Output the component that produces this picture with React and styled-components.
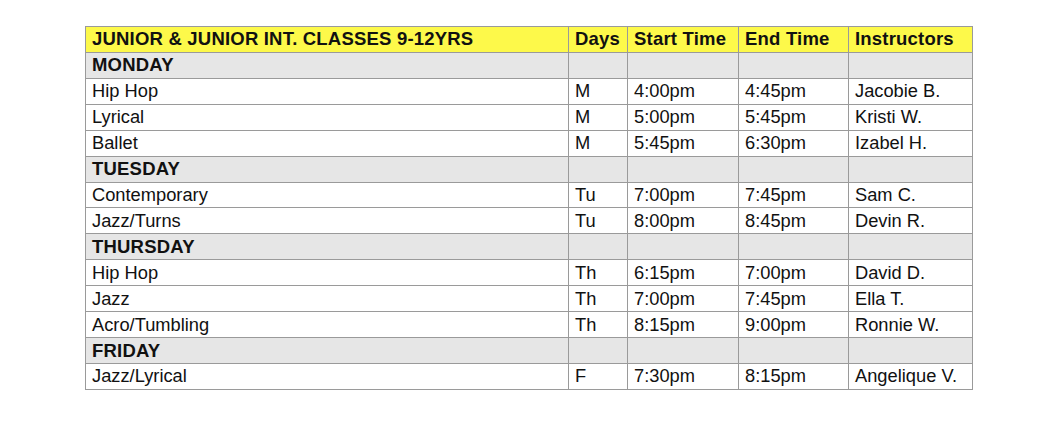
import React from 'react';
import styled, {createGlobalStyle} from 'styled-components';

const Global = createGlobalStyle`
  html, body {
    margin: 0;
    padding: 0;
    background: #fff;
  }
  body {
    font-family: "Liberation Sans", Arial, sans-serif;
  }
`;

const Page = styled.div`
  padding: 26px 0 0 85px;
`;

const Table = styled.table`
  border-collapse: collapse;
  table-layout: fixed;
  width: 887px;
  color: #111;
`;

const Row = styled.tr`
  height: 25.93px;
  background: ${props => props.kind === 'head' ? '#fdf94a' : props.kind === 'day' ? '#e6e6e6' : '#fff'};
  font-weight: ${props => props.kind === 'row' ? 'normal' : 'bold'};
  font-size: ${props => props.kind === 'row' ? '18.3px' : '18.5px'};
  letter-spacing: ${props => props.kind === 'row' ? '0' : '0.2px'};
`;

const Cell = styled.td`
  border: 1px solid #9a9a9a;
  padding: 0 0 0 6px;
  white-space: nowrap;
  overflow: hidden;
  line-height: 20px;
  vertical-align: middle;
`;

const widths = [483, 59, 111, 110, 124];

const schedule = [
  {day: 'MONDAY', classes: [
    ['Hip Hop', 'M', '4:00pm', '4:45pm', 'Jacobie B.'],
    ['Lyrical', 'M', '5:00pm', '5:45pm', 'Kristi W.'],
    ['Ballet', 'M', '5:45pm', '6:30pm', 'Izabel H.'],
  ]},
  {day: 'TUESDAY', classes: [
    ['Contemporary', 'Tu', '7:00pm', '7:45pm', 'Sam C.'],
    ['Jazz/Turns', 'Tu', '8:00pm', '8:45pm', 'Devin R.'],
  ]},
  {day: 'THURSDAY', classes: [
    ['Hip Hop', 'Th', '6:15pm', '7:00pm', 'David D.'],
    ['Jazz', 'Th', '7:00pm', '7:45pm', 'Ella T.'],
    ['Acro/Tumbling', 'Th', '8:15pm', '9:00pm', 'Ronnie W.'],
  ]},
  {day: 'FRIDAY', classes: [
    ['Jazz/Lyrical', 'F', '7:30pm', '8:15pm', 'Angelique V.'],
  ]},
];

export default function App() {
  return (
    <Page>
      <Global/>
      <Table>
        <colgroup>
          {widths.map((w, i) => <col key={i} style={{width: w}}/>)}
        </colgroup>
        <tbody>
          <Row kind="head">
            {['JUNIOR & JUNIOR INT. CLASSES 9-12YRS', 'Days', 'Start Time', 'End Time', 'Instructors']
              .map(t => <Cell key={t}>{t}</Cell>)}
          </Row>
          {schedule.map(group => (
            <React.Fragment key={group.day}>
              <Row kind="day">
                <Cell>{group.day}</Cell>
                <Cell/><Cell/><Cell/><Cell/>
              </Row>
              {group.classes.map((c, i) => (
                <Row kind="row" key={i}>
                  {c.map((t, j) => <Cell key={j}>{t}</Cell>)}
                </Row>
              ))}
            </React.Fragment>
          ))}
        </tbody>
      </Table>
    </Page>
  );
}
